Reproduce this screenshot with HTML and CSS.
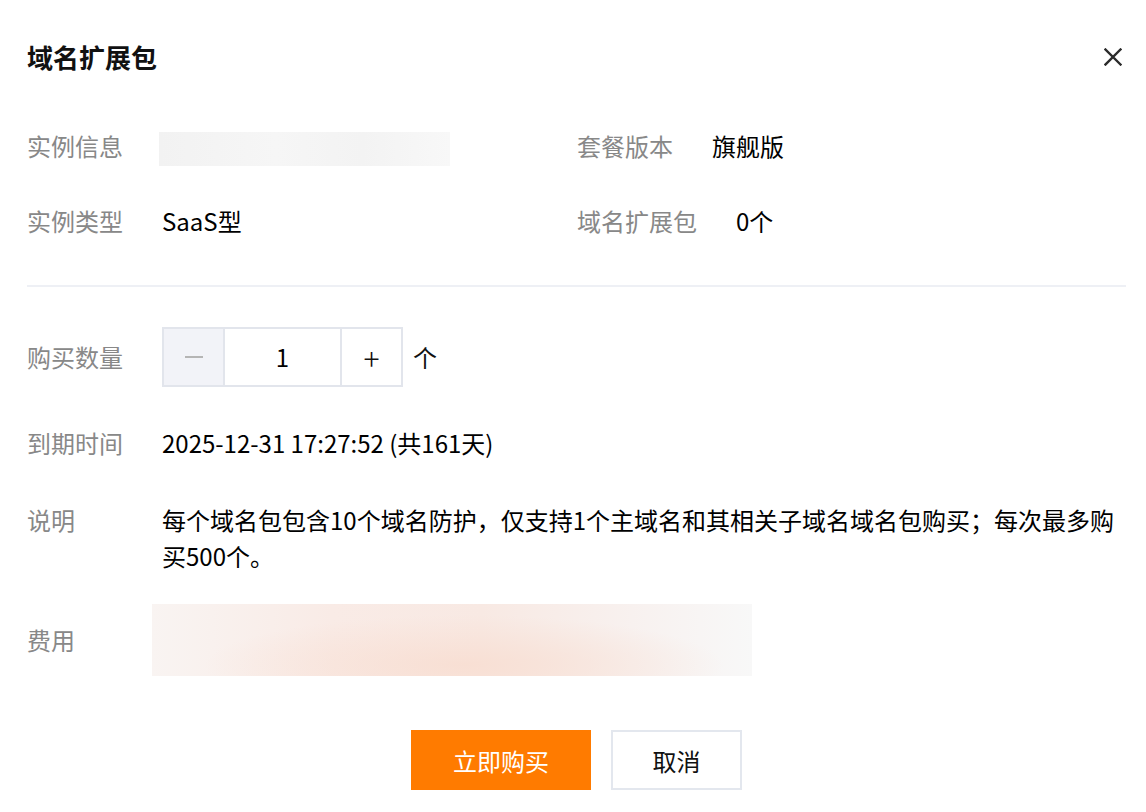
FILE: index.html
```html
<!DOCTYPE html>
<html lang="zh-CN">
<head>
<meta charset="utf-8">
<title>域名扩展包</title>
<link rel="stylesheet" href="styles.css">
</head>
<body>
<div class="dialog">
  <div class="header">
    <h1 class="title">域名扩展包</h1>
    <button class="close" aria-label="关闭">
      <svg width="18" height="18" viewBox="0 0 18 18"><path d="M1.5 1.5 L16.5 16.5 M16.5 1.5 L1.5 16.5" stroke="#2b2b2b" stroke-width="2.4" stroke-linecap="square"/></svg>
    </button>
  </div>

  <div class="info">
    <div class="info-item"><span class="info-label">实例信息</span><span class="mask mask-gray"></span></div>
    <div class="info-item"><span class="info-label">套餐版本</span><span class="info-value">旗舰版</span></div>
    <div class="info-item"><span class="info-label">实例类型</span><span class="info-value">SaaS型</span></div>
    <div class="info-item"><span class="info-label">域名扩展包</span><span class="info-value">0个</span></div>
  </div>

  <div class="divider"></div>

  <div class="form">
    <div class="row row-qty">
      <span class="label">购买数量</span>
      <div class="stepper">
        <span class="step step-minus"><span class="minus-bar"></span></span>
        <span class="step-input">1</span>
        <span class="step step-plus">+</span>
      </div>
      <span class="unit">个</span>
    </div>
    <div class="row row-date">
      <span class="label">到期时间</span>
      <span class="value">2025-12-31 17:27:52 (共161天)</span>
    </div>
    <div class="row row-desc">
      <span class="label">说明</span>
      <p class="value desc">每个域名包包含10个域名防护，仅支持1个主域名和其相关子域名域名包购买；每次最多购买500个。</p>
    </div>
    <div class="row row-fee">
      <span class="label fee-label">费用</span>
      <span class="mask mask-peach"></span>
    </div>
  </div>

  <div class="footer">
    <button class="btn btn-primary">立即购买</button>
    <button class="btn btn-default">取消</button>
  </div>
</div>
</body>
</html>
```

FILE: styles.css
```css
* { box-sizing: border-box; }
html, body {
  margin: 0;
  padding: 0;
  background: #ffffff;
}
body {
  font-family: "PingFang SC", "Noto Sans CJK SC", "Noto Sans", sans-serif;
  color: #000;
  width: 1146px;
  height: 812px;
  overflow: hidden;
}
.dialog {
  padding: 0 20px 0 27px;
}
.header {
  height: 108px;
  display: flex;
  align-items: center;
  justify-content: space-between;
  padding-top: 6px;
}
.title {
  margin: 0;
  font-size: 26px;
  font-weight: 700;
  color: #111;
  line-height: 36px;
}
.close {
  border: 0;
  background: none;
  padding: 0;
  margin-right: 4px;
  width: 18px;
  height: 18px;
  display: flex;
  cursor: pointer;
}
.info {
  display: grid;
  grid-template-columns: 550px 1fr;
  grid-auto-rows: 75px;
}
.info-item {
  display: flex;
  align-items: center;
  font-size: 24px;
  line-height: 36px;
}
.info-label {
  color: #888;
  margin-right: 39px;
}
.info-value {
  color: #000;
}
.mask {
  display: block;
}
.mask-gray {
  width: 291px;
  height: 34px;
  margin-left: -3px;
  margin-top: 6px;
  background: linear-gradient(90deg, #f2f2f2 0%, #f6f6f6 40%, #f3f3f3 70%, #f8f8f8 100%);
}
.divider {
  height: 2px;
  background: #eef0f5;
  margin-top: 27px;
}
.form {
  display: flex;
  flex-direction: column;
}
.row {
  display: flex;
  font-size: 24px;
  line-height: 36px;
}
.label {
  width: 135px;
  flex: none;
  color: #888;
}
.value {
  color: #000;
  margin: 0;
}
.row-qty {
  margin-top: 40px;
  align-items: center;
}
.stepper {
  display: flex;
  height: 60px;
  border: 2px solid #e2e5ec;
}
.step {
  width: 59px;
  display: flex;
  align-items: center;
  justify-content: center;
  font-size: 30px;
  color: #111;
}
.step-minus {
  background: #f2f3f8;
}
.minus-bar {
  width: 18px;
  height: 2px;
  background: #b5b5b5;
}
.step-input {
  width: 119px;
  display: flex;
  align-items: center;
  justify-content: center;
  border-left: 2px solid #e2e5ec;
  border-right: 2px solid #e2e5ec;
  font-size: 24px;
}
.step-plus {
  font-weight: 300;
}
.unit {
  margin-left: 10px;
  color: #111;
}
.row-date {
  margin-top: 38px;
}
.row-desc {
  margin-top: 41px;
}
.desc {
  width: 960px;
  line-height: 36px;
}
.row-fee {
  margin-top: 30px;
  align-items: center;
}
.fee-label {
  width: 125px;
}
.mask-peach {
  width: 600px;
  height: 72px;
  background:
    radial-gradient(ellipse 260px 50px at 52% 85%, rgba(248, 222, 210, 0.9), rgba(248, 228, 220, 0) 100%),
    linear-gradient(90deg, #f9f4f2 0%, #f9ebe6 30%, #f8e9e3 55%, #f8f1ef 80%, #f8f8f8 100%);
}
.footer {
  display: flex;
  justify-content: center;
  gap: 20px;
  margin-top: 54px;
}
.btn {
  height: 60px;
  font-family: inherit;
  font-size: 24px;
  cursor: pointer;
  padding: 0;
}
.btn-primary {
  width: 180px;
  background: #ff7b00;
  color: #fff;
  border: 0;
}
.btn-default {
  width: 131px;
  background: #fff;
  color: #111;
  border: 2px solid #e3e7ee;
}
```
